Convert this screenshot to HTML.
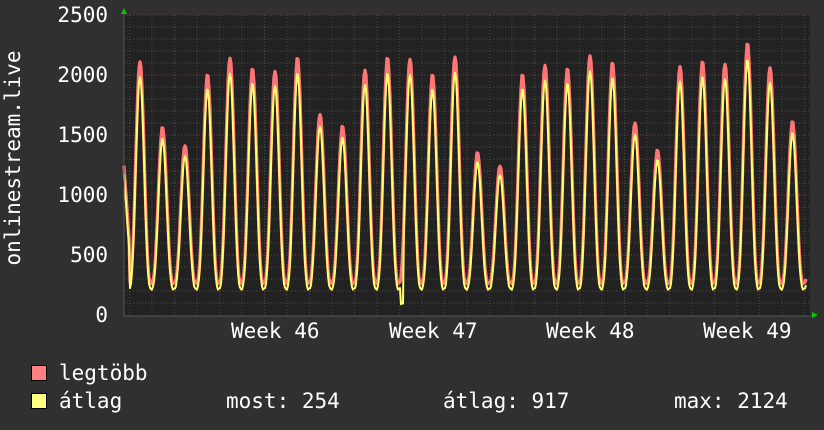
<!DOCTYPE html>
<html><head><meta charset="utf-8"><style>
html,body{margin:0;padding:0;background:#303030;}
body{width:824px;height:430px;overflow:hidden;position:relative;font-family:"DejaVu Sans Mono","Liberation Mono",monospace;color:#fff;}
.t{position:absolute;font-size:21px;line-height:21px;white-space:pre;}
.sq{position:absolute;width:14px;height:14px;border:1px solid #000;}
</style></head><body>
<svg id="g" width="824" height="430" style="position:absolute;left:0;top:0">
<rect x="124" y="15" width="686" height="301" fill="#222"/>
<g id="grid"></g>
<path id="red" fill="none" stroke="#ff7575" stroke-width="3.2" stroke-linejoin="round"/>
<path id="yel" fill="none" stroke="#ffff70" stroke-width="2" stroke-linejoin="round"/>
<line x1="124" y1="316" x2="812" y2="316" stroke="#555"/>
<line x1="124" y1="12" x2="124" y2="316" stroke="#555"/>
<polygon points="121,14 127,14 124,8" fill="#0c0"/>
<polygon points="812,312 812,318 818,315" fill="#0c0"/>
<text x="14" y="158" fill="#fff" font-family="DejaVu Sans Mono, Liberation Mono, monospace" font-size="21" text-anchor="middle" transform="rotate(-90 14 158)" dy="6">onlinestream.live</text>
</svg>
<div class="t" style="right:716px;top:5px">2500</div>
<div class="t" style="right:716px;top:65px">2000</div>
<div class="t" style="right:716px;top:125px">1500</div>
<div class="t" style="right:716px;top:185px">1000</div>
<div class="t" style="right:716px;top:245px">500</div>
<div class="t" style="right:716px;top:305px">0</div>
<div class="t" style="left:231px;top:321px">Week 46</div>
<div class="t" style="left:389px;top:321px">Week 47</div>
<div class="t" style="left:546px;top:321px">Week 48</div>
<div class="t" style="left:703px;top:321px">Week 49</div>
<div class="sq" style="left:31px;top:365px;background:#ff8080"></div>
<div class="sq" style="left:31px;top:393px;background:#ffff80"></div>
<div class="t" style="left:59px;top:363px">legtöbb</div>
<div class="t" style="left:59px;top:391px">átlag</div>
<div class="t" style="left:226px;top:391px">most: 254</div>
<div class="t" style="left:443px;top:391px">átlag: 917</div>
<div class="t" style="left:674px;top:391px">max: 2124</div>
<script>
var ns="http://www.w3.org/2000/svg",g=document.getElementById("grid");
function ln(x1,y1,x2,y2,c){var l=document.createElementNS(ns,"line");l.setAttribute("x1",x1);l.setAttribute("y1",y1);l.setAttribute("x2",x2);l.setAttribute("y2",y2);l.setAttribute("stroke",c);l.setAttribute("stroke-dasharray","1,2");g.appendChild(l);}
for(var v=100;v<=2500;v+=100){var y=315-v*0.12;ln(124,y,810,y,v%500==0?"#7a3a3a":"#4a4a4a");}
for(var x=129.5;x<810;x+=22.5){ln(x,15,x,316,"#4a4a4a");}
var peaks=[2120,1570,1420,2010,2150,2060,2040,2150,1680,1580,2050,2150,2140,2010,2160,1360,1250,2010,2090,2060,2170,2110,1610,1380,2080,2120,2100,2270,2070,1620];
function build(f,mn){var d="";for(var x=124;x<=806;x+=1){var p=(x-140)/22.5;var i=Math.round(p);var k=Math.max(0,Math.min(29,i));var pk=peaks[k]*f;var c=(1+Math.cos((p-i)*2*Math.PI))/2;var v=mn+(pk-mn)*Math.pow(c,1.5);if(x<130)v=Math.max(v,1250*f-(x-124)*120);if(f<1&&Math.abs(x-402)<2)v=100;var y=315-v*0.12+((x*7)%3)*0.6;d+=(d?"L":"M")+x+","+y.toFixed(1);}return d;}
document.getElementById("red").setAttribute("d",build(1,270));
document.getElementById("yel").setAttribute("d",build(0.94,220));
</script>
</body></html>
